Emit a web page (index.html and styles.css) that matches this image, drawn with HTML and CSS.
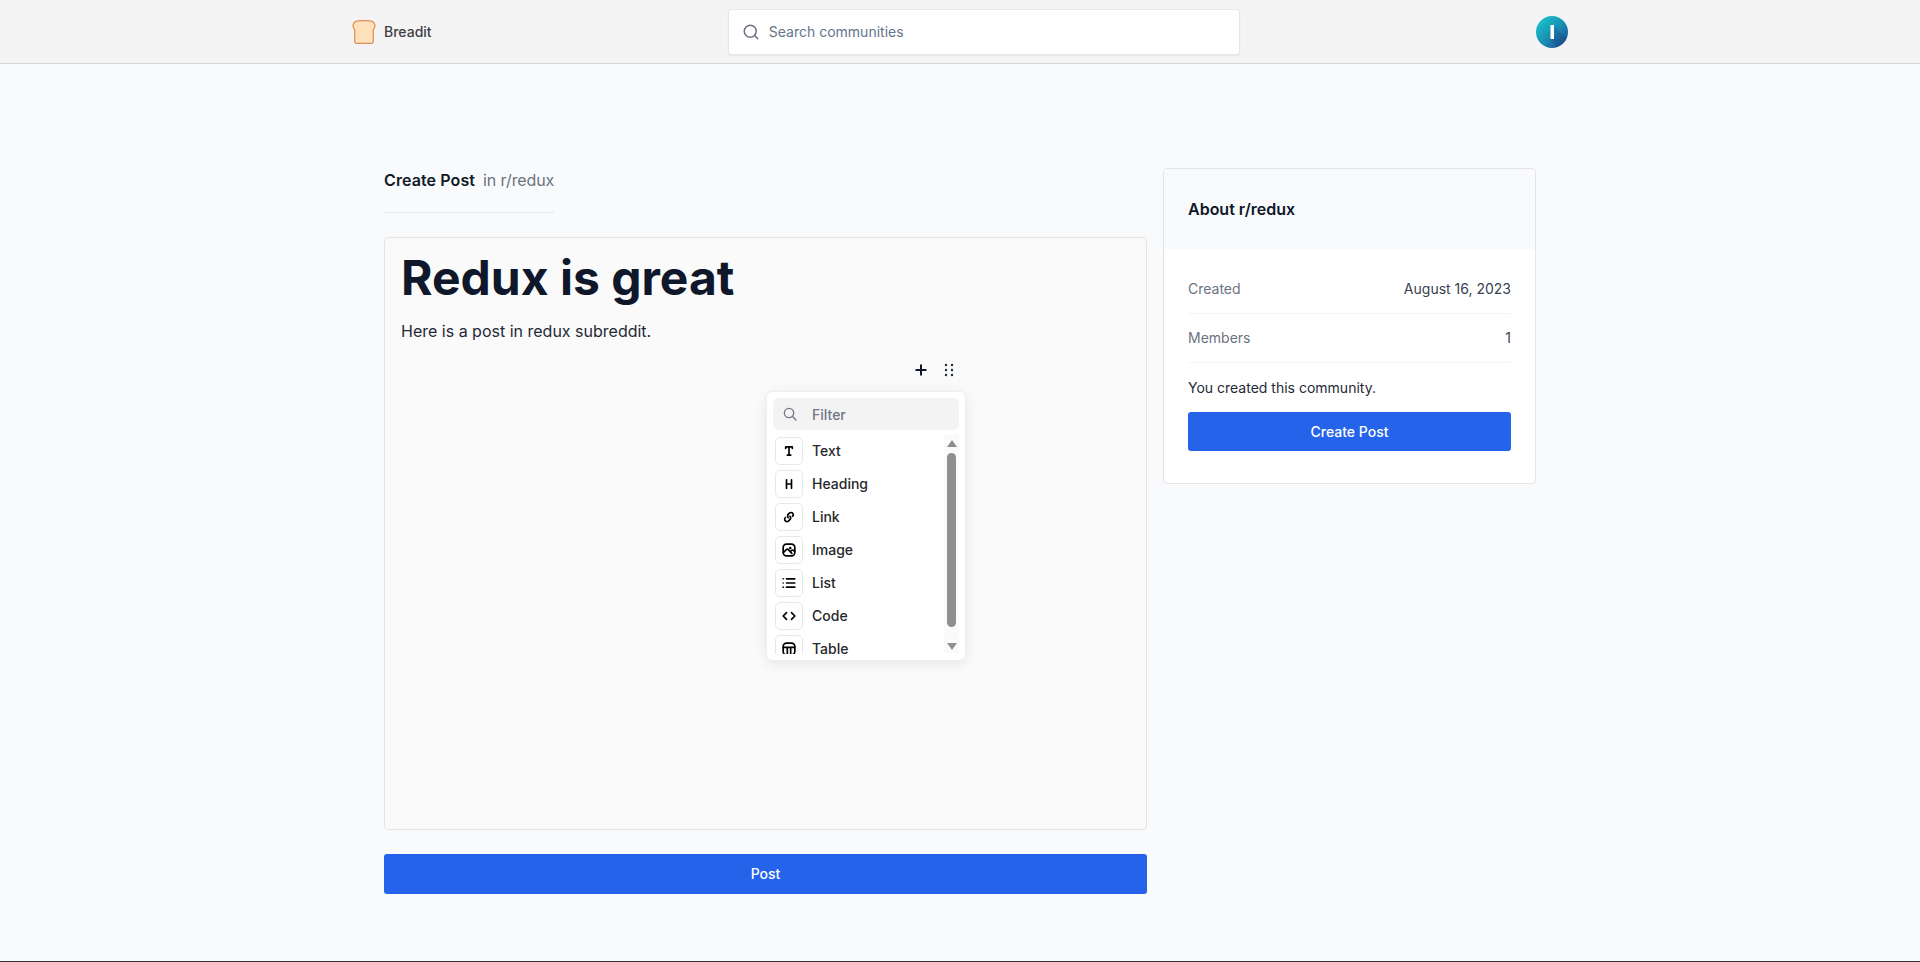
FILE: index.html
```html
<!DOCTYPE html>
<html lang="en">
<head>
<meta charset="utf-8">
<title>Breadit</title>
<link rel="stylesheet" href="styles.css">
</head>
<body>
<header class="navbar">
  <div class="nav-inner">
    <a class="brand">
      <svg class="bread" viewBox="1 0.5 22 22.700" width="24" height="24"><path d="M12 1.200c3-.2 6-.2 8 .8 2.200 1.100 3 4 1.600 6.500-.3.5-.6.8-.8 1.100V20.300c0 1.300-.9 2.200-2.200 2.200H5.400c-1.300 0-2.200-.9-2.200-2.200V9.600c-.2-.3-.5-.6-.8-1.100C1 6 1.800 3.100 4 2c2-1 5-1 8-.8z" fill="#ffe1bb" stroke="#e0915a" stroke-width="1.200" stroke-linejoin="round"/></svg>
      <span class="brand-name">Breadit</span>
    </a>
    <div class="search">
      <svg class="search-icon" viewBox="0 0 24 24" width="18" height="18"><circle cx="11" cy="11" r="8"/><path d="m21 21-4.300-4.300"/></svg>
      <span class="search-text">Search communities</span>
    </div>
    <div class="avatar">
      <svg viewBox="0 0 32 32" width="32" height="32">
        <defs>
          <linearGradient id="av" x1="0" y1="0" x2="1" y2="1"><stop offset="0" stop-color="#1ccfd2"/><stop offset=".5" stop-color="#1a92b4"/><stop offset="1" stop-color="#1f3f8f"/></linearGradient>
          <clipPath id="avc"><circle cx="16" cy="16" r="16"/></clipPath>
        </defs>
        <circle cx="16" cy="16" r="16" fill="url(#av)"/>
        <path d="M18 10 34 26v8H24L14 24z" fill="#12306f" opacity=".22" clip-path="url(#avc)"/>
        <rect x="14.500" y="9" width="3.500" height="14" fill="#fff"/>
      </svg>
    </div>
  </div>
</header>

<main class="page">
  <div class="grid">
    <section class="left">
      <div class="heading">
        <h3 class="heading-title">Create Post</h3>
        <span class="heading-sub">in r/redux</span>
      </div>
      <div class="editor">
        <h1 class="post-title">Redux is great</h1>
        <p class="post-body">Here is a post in redux subreddit.</p>

        <div class="toolbar">
          <svg viewBox="0 0 14 14" width="14" height="14"><path d="M7 1.500v11M1.500 7h11" stroke="#0f172a" stroke-width="2" fill="none"/></svg>
          <svg viewBox="0 0 10 14" width="10" height="14"><g fill="#1f2937"><circle cx="2" cy="2" r="1.200"/><circle cx="8" cy="2" r="1.200"/><circle cx="2" cy="7" r="1.200"/><circle cx="8" cy="7" r="1.200"/><circle cx="2" cy="12" r="1.200"/><circle cx="8" cy="12" r="1.200"/></g></svg>
        </div>

        <div class="menu">
          <div class="filter">
            <svg class="filter-icon" viewBox="0 0 24 24" width="16" height="16"><circle cx="10.500" cy="10.500" r="7"/><path d="m21 21-5.500-5.500"/></svg>
            <span>Filter</span>
          </div>
          <div class="menu-body">
            <ul class="items">
              <li class="item"><span class="ico"><svg viewBox="0 0 24 24"><path d="M8 9V7.200C8 7.090 8.090 7 8.200 7L12 7M16 9V7.200C16 7.090 15.910 7 15.800 7L12 7M12 7L12 17M12 17H10M12 17H14"/></svg></span>Text</li>
              <li class="item"><span class="ico"><svg viewBox="0 0 24 24"><path d="M9 7L9 12M9 17V12M9 12L15 12M15 7V12M15 17L15 12"/></svg></span>Heading</li>
              <li class="item"><span class="ico"><svg viewBox="0 0 24 24"><path d="M7.700 12.600L7.680 12.620C6.540 13.700 6.520 15.520 7.640 16.620C8.720 17.710 10.480 17.710 11.570 16.630L13.030 15.190C14.070 14.160 14.210 12.520 13.370 11.330L13.220 11.120"/><path d="M16.220 11.120L16.360 10.980C17.290 10.030 17.350 8.520 16.490 7.500C15.570 6.400 13.930 6.250 12.830 7.180L11.390 8.390C10.090 9.480 9.960 11.420 11.090 12.690L11.120 12.720"/></svg></span>Link</li>
              <li class="item"><span class="ico"><svg viewBox="0 0 24 24"><rect width="14" height="14" x="5" y="5" rx="4"/><path d="M5.140 15.320L8.690 11.570C9.030 11.200 9.490 11 9.970 11C10.450 11 10.910 11.200 11.240 11.570L15.390 16M13.580 14.070L15.010 12.530C15.350 12.170 15.810 11.970 16.290 11.970C16.770 11.970 17.230 12.170 17.570 12.530L18.840 13.960"/><circle cx="13.500" cy="9.500" r="1.500" class="solid"/></svg></span>Image</li>
              <li class="item"><span class="ico"><svg viewBox="0 0 24 24"><path d="M9 7H19M9 12H19M9 17H19M5 7H5.010M5 12H5.010M5 17H5.010"/></svg></span>List</li>
              <li class="item"><span class="ico"><svg viewBox="0 0 24 24"><path d="M9 8L5 12L9 16M15 8L19 12L15 16"/></svg></span>Code</li>
              <li class="item"><span class="ico"><svg viewBox="0 0 24 24"><rect width="14" height="14" x="5" y="5" rx="4"/><path d="M5 10H19M10 10V19M14 10V19"/></svg></span>Table</li>
            </ul>
            <div class="scrollbar">
              <span class="arrow-up"></span>
              <span class="thumb"></span>
              <span class="arrow-down"></span>
            </div>
          </div>
        </div>
      </div>
      <button class="btn btn-post">Post</button>
    </section>

    <aside class="card">
      <div class="card-head"><p class="card-title">About r/redux</p></div>
      <dl class="card-body">
        <div class="row"><dt>Created</dt><dd>August 16, 2023</dd></div>
        <div class="row"><dt>Members</dt><dd>1</dd></div>
        <div class="row-note">You created this community.</div>
        <button class="btn btn-create">Create Post</button>
      </dl>
    </aside>
  </div>
</main>
</body>
</html>
```
FILE: styles.css
```css
* { box-sizing: border-box; }
html, body { margin: 0; padding: 0; }
body {
  height: 962px;
  background: #f9fafb;
  border-bottom: 1px solid #333;
  font-family: Inter, "Liberation Sans", sans-serif;
  color: #0f172a;
  overflow: hidden;
}
.navbar {
  height: 64px;
  background: #f4f4f5;
  border-bottom: 1px solid #d4d4d8;
  display: flex;
  justify-content: center;
  align-items: center;
}
.nav-inner {
  width: 1216px;
  display: flex;
  align-items: center;
  justify-content: space-between;
}
.brand { display: flex; align-items: center; gap: 8px; }
.bread { display: block; }
.brand-name { font-size: 14px; font-weight: 500; color: #3f3f46; }
.search {
  width: 512px;
  height: 46px;
  background: #fff;
  border: 1px solid #e2e8f0;
  border-radius: 3px;
  display: flex;
  align-items: center;
  gap: 9px;
  padding-left: 13px;
  box-shadow: 0 1px 2px rgba(0,0,0,.06);
}
.search-icon { fill: none; stroke: #6b7280; stroke-width: 2; stroke-linecap: round; }
.search-text { font-size: 14px; color: #64748b; }
.avatar { width: 32px; height: 32px; }
.avatar svg { display: block; }

.page { display: flex; justify-content: center; padding-top: 104px; }
.grid {
  width: 1152px;
  display: grid;
  grid-template-columns: 763px 373px;
  column-gap: 16px;
  align-items: start;
}
.left { display: flex; flex-direction: column; }
.heading {
  align-self: flex-start;
  height: 45px;
  display: flex;
  align-items: center;
  gap: 8px;
  border-bottom: 1px solid #e5e7eb;
  padding-bottom: 20px;
}
.heading-title { margin: 0; font-size: 16px; font-weight: 600; color: #111827; letter-spacing: .1px; }
.heading-sub { font-size: 16px; color: #6b7280; letter-spacing: -.1px; }
.editor {
  position: relative;
  margin-top: 24px;
  height: 593px;
  background: #fafafa;
  border: 1px solid #e4e4e7;
  border-radius: 4px;
  padding: 16px;
}
.post-title {
  margin: 0;
  font-size: 48px;
  line-height: 48px;
  font-weight: 700;
  color: #0f172a;
}
.post-body { margin: 17px 0 0; font-size: 16px; line-height: 24px; color: #1f2937; }
.toolbar {
  position: absolute;
  left: 529px;
  top: 125px;
  display: flex;
  align-items: center;
  gap: 16px;
}
.toolbar svg { display: block; }
.menu {
  position: absolute;
  left: 381px;
  top: 153px;
  width: 200px;
  height: 270px;
  background: #fff;
  border: 1px solid #eceef1;
  border-radius: 6px;
  box-shadow: 0 3px 15px -3px rgba(13,20,33,.13);
  padding: 6px 6px 5px;
  overflow: hidden;
}
.filter {
  height: 32px;
  background: #f3f3f4;
  border-radius: 6px;
  display: flex;
  align-items: center;
  gap: 14px;
  padding-left: 9px;
  font-size: 14px;
  font-weight: 500;
  color: #707684;
}
.filter-icon { fill: none; stroke: #707684; stroke-width: 2; stroke-linecap: round; }
.menu-body { display: flex; align-items: flex-start; margin-top: 7px; height: 217px; }
.items {
  list-style: none;
  margin: 0;
  padding: 0 0 0 2px;
  flex: 1;
  height: 217px;
  overflow: hidden;
}
.item {
  height: 33px;
  display: flex;
  align-items: flex-start;
  gap: 9px;
  font-size: 14px;
  font-weight: 500;
  line-height: 28px;
  color: #27272a;
}
.ico {
  width: 28px;
  height: 28px;
  flex: none;
  background: #fff;
  border: 1px solid #e8e8eb;
  border-radius: 5px;
  display: flex;
  align-items: center;
  justify-content: center;
}
.ico svg {
  width: 20px;
  height: 20px;
  fill: none;
  stroke: #000;
  stroke-width: 2;
  stroke-linecap: round;
  stroke-linejoin: round;
}
.ico .solid { fill: #000; stroke: none; }
.scrollbar {
  width: 15px;
  height: 218px;
  margin-top: -2px;
  background: #fafafa;
  display: flex;
  flex-direction: column;
  align-items: center;
}
.arrow-up, .arrow-down {
  width: 0;
  height: 0;
  border-left: 5px solid transparent;
  border-right: 5px solid transparent;
}
.arrow-up { border-bottom: 7px solid #8f8f8f; margin-top: 5px; }
.arrow-down { border-top: 7px solid #8f8f8f; margin-top: 16px; }
.thumb {
  width: 9px;
  height: 174px;
  margin-top: 6px;
  background: #8f8f8f;
  border-radius: 5px;
}
.btn {
  display: block;
  width: 100%;
  border: 0;
  border-radius: 3px;
  background: #2563eb;
  color: #fff;
  font-family: inherit;
  font-size: 14px;
  font-weight: 500;
}
.btn-post { height: 40px; margin-top: 24px; padding: 0 0 2px; }
.card {
  background: #fff;
  border: 1px solid #e4e4e7;
  border-radius: 4px;
  overflow: hidden;
  height: 316px;
}
.card-head { height: 80px; background: #f9fafb; padding: 0 24px; display: flex; align-items: center; }
.card-title { margin: 0; font-size: 16px; font-weight: 600; color: #0f172a; }
.card-body { margin: 0; padding: 16px 24px 0; font-size: 14px; }
.row {
  height: 49px;
  padding-bottom: 1px;
  display: flex;
  align-items: center;
  justify-content: space-between;
  border-bottom: 1px solid #f3f4f6;
}
.row dt { color: #6b7280; }
.row dd { margin: 0; color: #374151; }
.row-note { height: 49px; padding-bottom: 1px; display: flex; align-items: center; color: #1f2937; }
.btn-create { height: 39px; }
```
